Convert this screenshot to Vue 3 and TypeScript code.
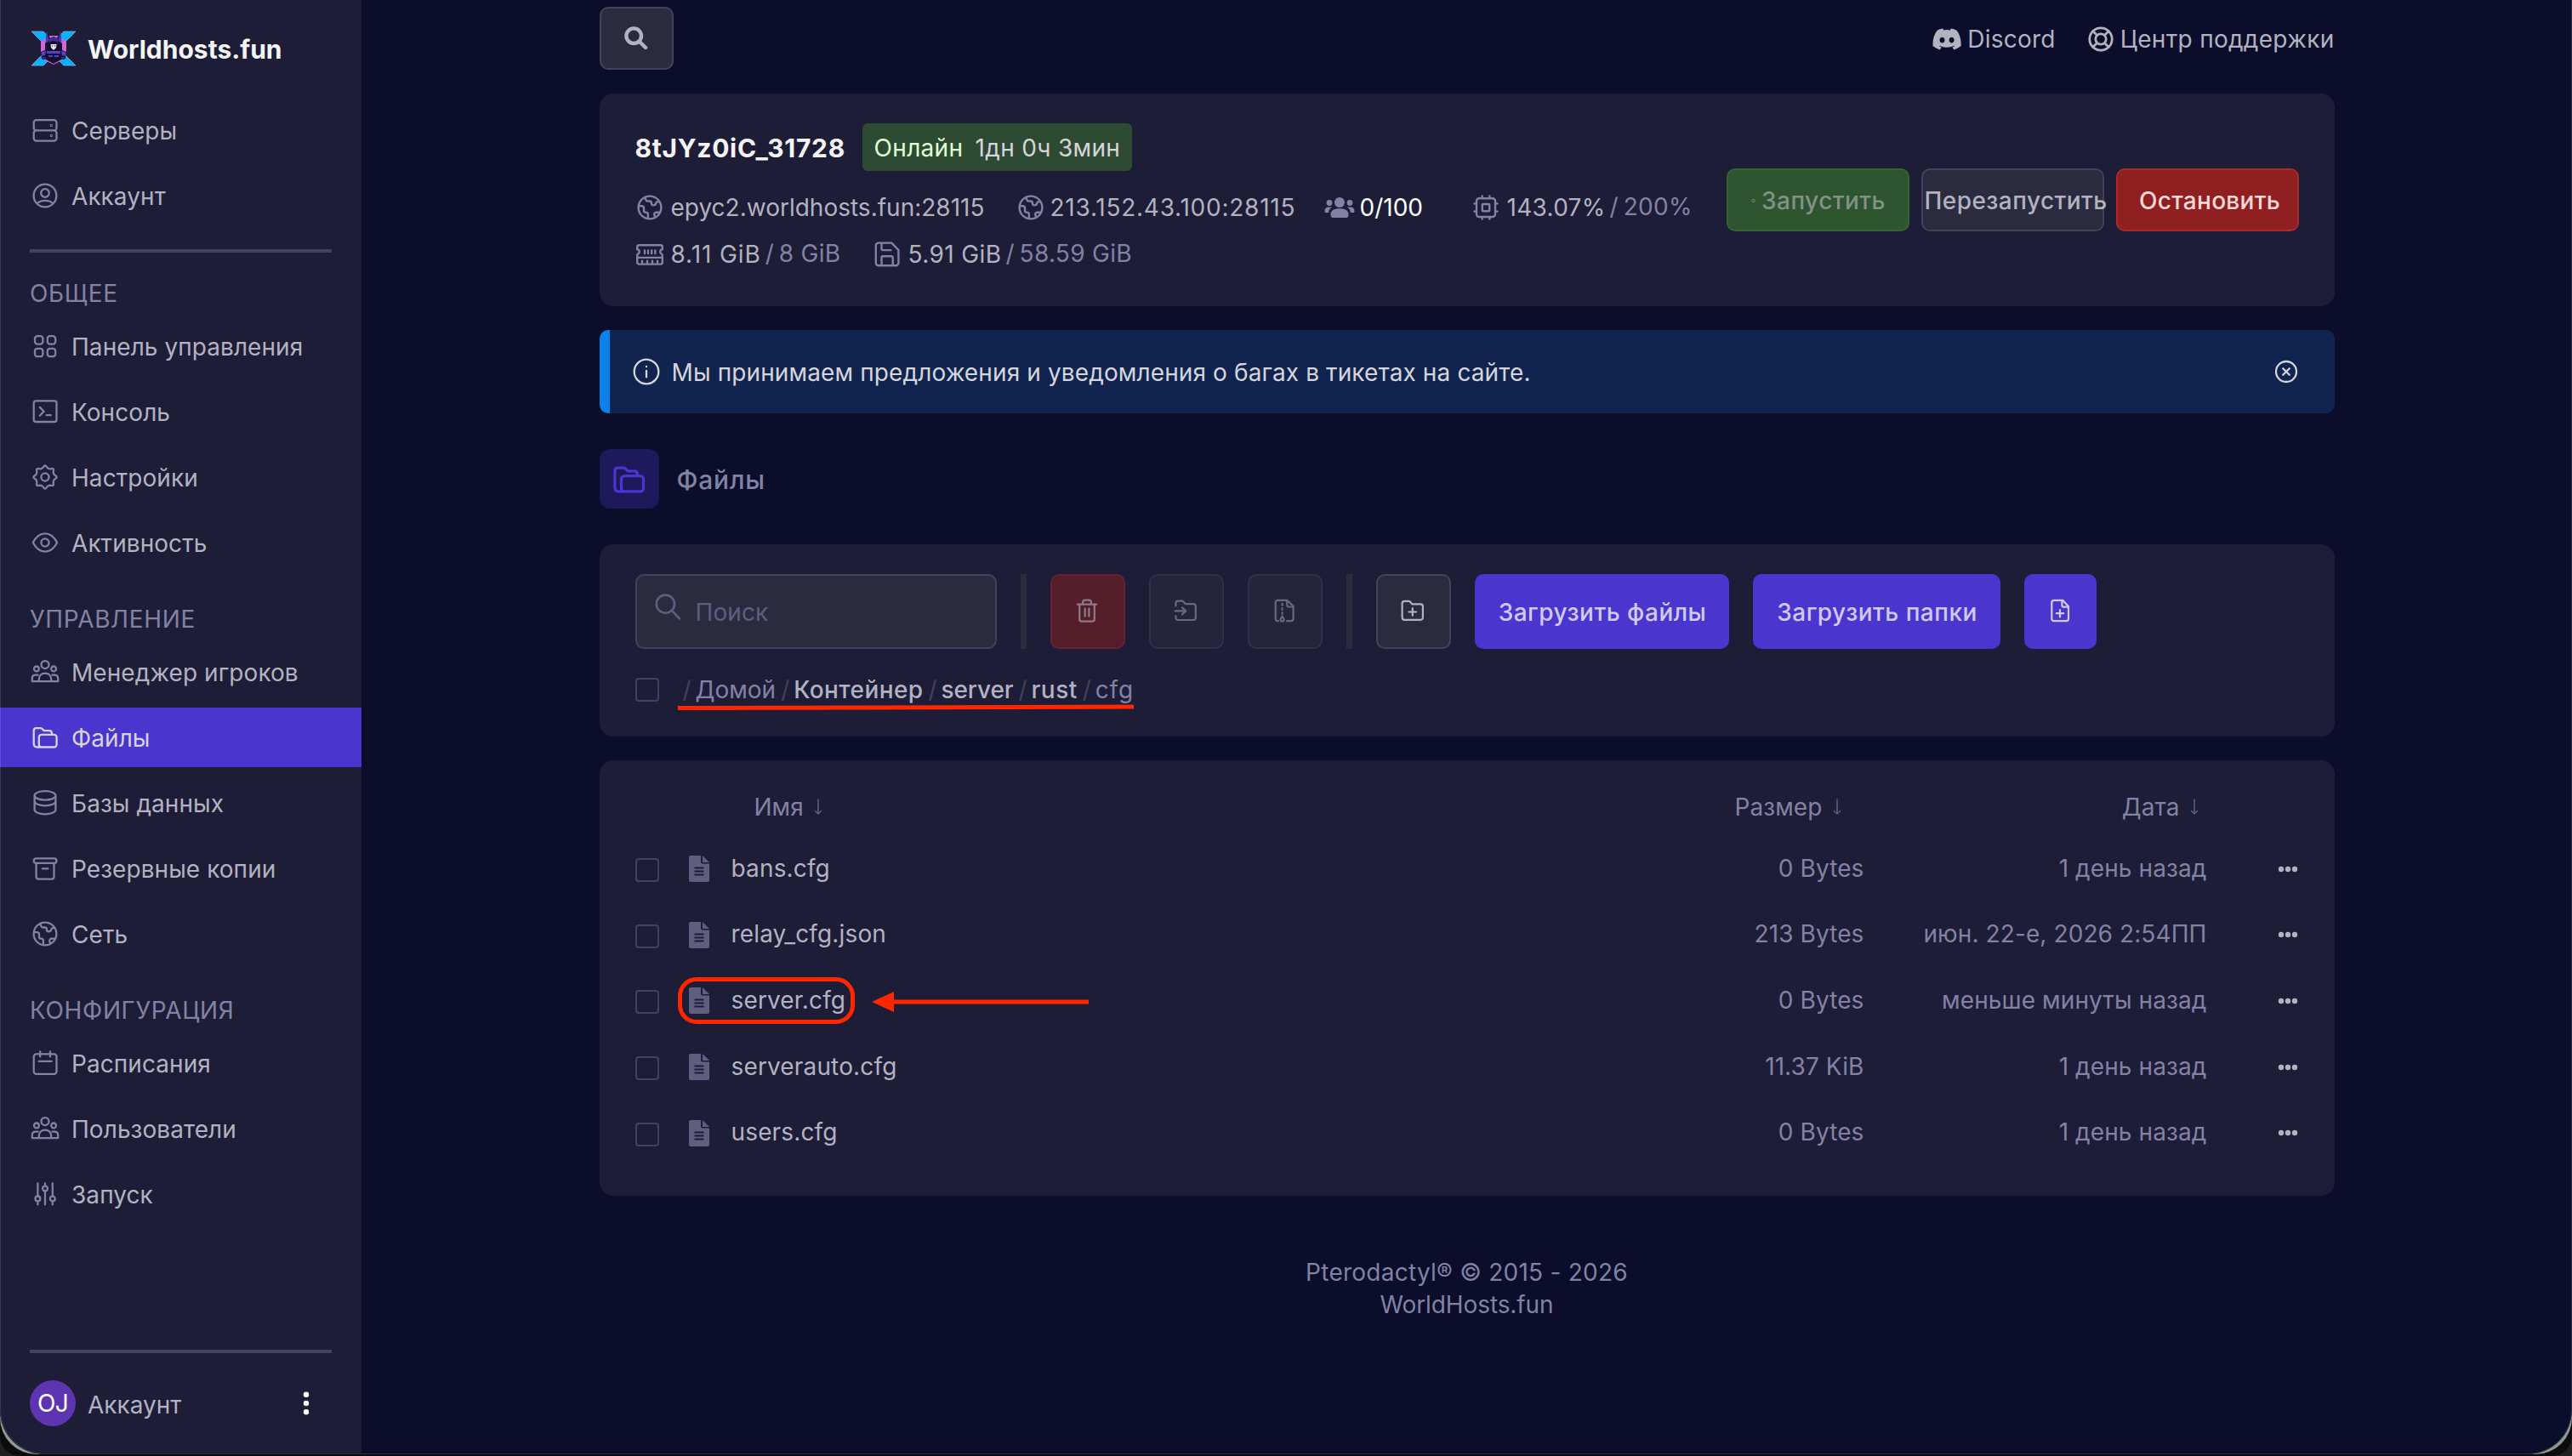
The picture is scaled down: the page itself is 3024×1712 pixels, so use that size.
<script setup lang="ts">
interface NavItem { icon: string; label: string; active?: boolean }
interface NavGroup { title: string; items: NavItem[] }
interface FileRow { name: string; size: string; date: string; marked?: boolean }

// Wavy gear outline: eight soft lobes around the centre.
function gearPath(): string {
  const pts: string[] = []
  for (let i = 0; i < 96; i++) {
    const a = (i / 96) * Math.PI * 2
    const r = 12 + 1.35 * Math.cos(8 * a) + 0.25 * Math.cos(16 * a)
    pts.push(`${(18 + r * Math.sin(a)).toFixed(2)} ${(18 - r * Math.cos(a)).toFixed(2)}`)
  }
  return `M${pts.join('L')}Z`
}

const dot = (x: number, y: number, r: number) => `M${x - r} ${y}a${r} ${r} 0 1 0 ${2 * r} 0a${r} ${r} 0 1 0 ${-2 * r} 0Z`
const box = (x: number, y: number, w: number, h: number, r: number) =>
  `M${x + r} ${y}h${w - 2 * r}a${r} ${r} 0 0 1 ${r} ${r}v${h - 2 * r}a${r} ${r} 0 0 1 ${-r} ${r}h${-(w - 2 * r)}a${r} ${r} 0 0 1 ${-r} ${-r}v${-(h - 2 * r)}a${r} ${r} 0 0 1 ${r} ${-r}Z`

// Stroke icons on a 36x36 grid.
const icons: Record<string, string> = {
  server: box(4.7, 6.2, 26.8, 12.2, 3) + box(4.7, 18.4, 26.8, 12.2, 3) + dot(25.3, 12.5, 0.5) + dot(25.3, 24.4, 0.5),
  account: dot(18, 18, 13.4) + dot(18, 15, 4.8) + 'M9 27.3c1.6-2.2 5-3.5 9-3.5s7.4 1.3 9 3.5',
  grid: box(6, 6.2, 9.4, 9.4, 3) + box(20.8, 6.2, 9.4, 9.4, 3) + box(6, 20.8, 9.4, 9.4, 3) + box(20.8, 20.8, 9.4, 9.4, 3),
  terminal: box(4.7, 5.4, 26.8, 24.6, 2.6) + 'M11.8 12.9l4.8 4.9-4.8 4.9M19.6 22.2h5.2',
  gear: gearPath() + dot(18, 18, 4.6),
  eye: 'M3.8 18C7.6 10.7 12.5 7.4 18 7.4S28.4 10.7 32.2 18C28.4 25.3 23.5 28.6 18 28.6S7.6 25.3 3.8 18Z' + dot(18, 18, 4.6),
  users: dot(18, 9.6, 4.5) + dot(7.9, 14.4, 2.9) + dot(28.1, 14.4, 2.9) +
    'M10.8 29v-2.2c0-4.4 3-7.2 7.2-7.2s7.2 2.8 7.2 7.2V29M9.6 21.6H7c-2.6 0-4.2 1.6-4.2 4V29.2h30.4V25.6c0-2.4-1.6-4-4.2-4h-2.6',
  folders: box(10.8, 14.9, 20.8, 14.6, 3) + 'M14 29.5H8.7c-2.6 0-4-1.4-4-4V10.2c0-2 1-3 3-3h5c1 0 1.7.4 2.3 1.1l1.7 1.9h6.2c2 0 3 1 3 3v1.5',
  database: 'M5.6 9.4c0-2.9 5.5-5.2 12.4-5.2s12.4 2.3 12.4 5.2-5.5 5.2-12.4 5.2S5.6 12.3 5.6 9.4ZM5.6 9.4V26c0 3 5.5 5.3 12.4 5.3S30.4 29 30.4 26V9.4M5.6 16c0 2.9 5.500 5.300 12.400 5.300s12.400-2.400 12.400-5.300',
  archive: box(4.7, 6.3, 26.8, 5.6, 2.7) + 'M7.6 12v15.7c0 1.8 1.1 2.9 2.9 2.9h15.1c1.8 0 2.9-1.1 2.9-2.9V12M14.8 18.4h6.6',
  globe: dot(18, 18, 13.4) +
    'M12.2 6.4l1.3 2.8c.4.9 1.1 1.3 2 1.3h2.1c1.4 0 2.3 1 2.3 2.3 0 1.6.9 2.6 2.4 2.6 1.8 0 2.6-.9 2.9-2.6.2-1 .9-1.6 1.9-1.6h2.6M4.8 16.2h3.6c1.7 0 2.6 1 2.6 2.5v2.7c0 1.5.9 2.3 2.3 2.3 1.7 0 2.6 1 2.6 2.6v4.8M24.3 29.4l-1-2.5c-.4-1.8.6-3.2 2.3-3.2h4.4',
  calendar: box(4.7, 7.4, 26.8, 23.4, 3) + 'M12.2 4.4v6M24 4.4v6M10.6 15.8h15',
  sliders: dot(9.4, 23.4, 2.9) + dot(18, 11.6, 2.9) + dot(26.8, 23.4, 2.9) + 'M9.4 5.4v15M9.4 26.4v4M18 5.4v3.2M18 14.6v15.8M26.8 5.4v15M26.8 26.4v4',
  ram: 'M3.2 9.2a2 2 0 0 1 2-2h25.600a2 2 0 0 1 2 2v3a2.800 2.800 0 0 0-1.200 5.200l1.200 1.400v8.800a2 2 0 0 1-2 2H5.200a2 2 0 0 1-2-2v-8.800l1.200-1.400A2.800 2.800 0 0 0 3.200 12.200ZM3.600 21.900h28.800M12 13.400v3.600M16 13.400v3.600M20.200 13.400v3.600M24.400 13.400v3.600M9 25.600v3.600M15 25.600v3.600M21 25.600v3.600M27 25.600v3.600',
  disk: 'M7.8 4.6h15.4l8.2 8.4v15.2a3 3 0 0 1-3 3H7.8a3 3 0 0 1-3-3V7.600a3 3 0 0 1 3-3ZM11.500 31V21.800a1.500 1.500 0 0 1 1.500-1.500h10.200a1.500 1.500 0 0 1 1.500 1.500V31M11.500 5v6.600a1.500 1.500 0 0 0 1.500 1.500h9.500',
  cpu: box(7, 7.2, 22, 21.8, 3) + box(13.8, 14, 8.4, 8.2, 0.5) + 'M13.6 4.4v2.4M22.4 4.4v2.4M13.6 29.2v2.4M22.4 29.2v2.4M4.4 13.4h2.4M4.4 22.6h2.4M29.2 13.4h2.4M29.2 22.6h2.4',
  lifebuoy: dot(18, 18, 13.2) + dot(18, 18, 6.2) + 'M8.6 8.6l5 5M27.4 8.6l-5 5M8.6 27.4l5-5M27.4 27.4l-5-5',
  info: dot(18, 18, 14.3) + 'M18 17v7.4M18 11.8v.4',
  close: dot(18, 18, 12) + 'M14.2 14.2l7.6 7.6M21.8 14.2l-7.6 7.6',
  search: dot(15.4, 15.2, 10.6) + 'M23 23l9 9.4',
  trash: 'M6.8 10.6h22.4M13.2 10.2V8c0-1.6 1-2.4 2.4-2.4h4.8c1.4 0 2.4.8 2.4 2.4v2.2M9.2 11v17c0 1.6 1 2.6 2.6 2.6h12.4c1.6 0 2.6-1 2.6-2.6V11M15.6 15.6v9M20.4 15.6v9',
  folderMove: 'M6.4 12.6V9.4c0-1.8.9-2.7 2.7-2.7h4.6c.9 0 1.4.3 1.9.9l2 2.6h9.5c1.8 0 2.7.9 2.7 2.7v13.4c0 1.8-.9 2.7-2.7 2.7H9.1c-1.8 0-2.7-.9-2.7-2.7v-2M5.6 18.4h12M14 14.4l4.2 4-4.2 4',
  fileZip: 'M11 30.2H10.4c-1.8 0-2.7-.9-2.7-2.7V8.6c0-1.8.9-2.7 2.7-2.7h11.2l7 7.2v14.4c0 1.8-.9 2.7-2.7 2.7H21M21.2 6.2v5c0 1.5.8 2.3 2.3 2.3h4.8M15.6 9.8v2M15.6 15v2M15.6 20v2M15.6 24.4l-1.9 3.6a2 2 0 1 0 3.8 0Z',
  folderPlus: 'M5.6 9.6c0-1.8.9-2.7 2.7-2.7h5c.9 0 1.4.3 1.9.9l2 2.6h10c1.8 0 2.7.9 2.7 2.7v13c0 1.8-.9 2.7-2.7 2.7H8.3c-1.8 0-2.7-.9-2.7-2.7ZM17.8 15.2v8.6M13.5 19.5h8.6',
  filePlus: 'M8.3 8.6c0-1.8.9-2.7 2.7-2.7h10.4l6.6 7v14.6c0 1.8-.9 2.7-2.7 2.7H11c-1.8 0-2.7-.9-2.7-2.7ZM20.4 6.2v5.2c0 1.5.8 2.3 2.3 2.3h5M18 17v8.4M13.8 21.2h8.4',
}

const topItems: NavItem[] = [{ icon: 'server', label: 'Серверы' }, { icon: 'account', label: 'Аккаунт' }]
const groups: NavGroup[] = [
  { title: 'ОБЩЕЕ', items: [
    { icon: 'grid', label: 'Панель управления' },
    { icon: 'terminal', label: 'Консоль' },
    { icon: 'gear', label: 'Настройки' },
    { icon: 'eye', label: 'Активность' },
  ] },
  { title: 'УПРАВЛЕНИЕ', items: [
    { icon: 'users', label: 'Менеджер игроков' },
    { icon: 'folders', label: 'Файлы', active: true },
    { icon: 'database', label: 'Базы данных' },
    { icon: 'archive', label: 'Резервные копии' },
    { icon: 'globe', label: 'Сеть' },
  ] },
  { title: 'КОНФИГУРАЦИЯ', items: [
    { icon: 'calendar', label: 'Расписания' },
    { icon: 'users', label: 'Пользователи' },
    { icon: 'sliders', label: 'Запуск' },
  ] },
]
const files: FileRow[] = [
  { name: 'bans.cfg', size: '0 Bytes', date: '1 день назад' },
  { name: 'relay_cfg.json', size: '213 Bytes', date: 'июн. 22-е, 2026 2:54ПП' },
  { name: 'server.cfg', size: '0 Bytes', date: 'меньше минуты назад', marked: true },
  { name: 'serverauto.cfg', size: '11.37 KiB', date: '1 день назад' },
  { name: 'users.cfg', size: '0 Bytes', date: '1 день назад' },
]
</script>

<template>
  <div class="screen">
    <div class="window">
      <aside class="sidebar">
        <div class="brand">
          <svg class="logo" viewBox="0 0 54 42" width="54" height="42">
            <path d="M1 1h14l11 11-6 8zM53 1H39L28 12l6 8zM1 41h14l11-11-6-8zM53 41H39L28 30l6-8z" fill="#00b4ff" stroke="#9aa3b8" stroke-width=".8" />
            <path d="M12 13l9-7h12l9 7v14l-5 8-10 5-10-5-5-8z" fill="#d465d6" />
            <path d="M19 1l2 11-4 3v8l-5 2 1 8 5 1 9 5 9-5 5-1 1-8-5-2v-8l-4-3 2-11-4 8-4-2-4 2z" fill="#15102f" />
            <path d="M19 0l2.500 12-4 3 .5-8zM35 0l-2.500 12 4 3-.5-8z" fill="#4a38b8" />
            <path d="M21 10q6-4 12 0l-1 4q-5-4-10 0z" fill="#3d2f9e" />
            <path d="M23.500 16h7l-.5 4-3 3-3-3z" fill="#efeaf7" />
            <path d="M24.800 18h1.500M27.900 18h1.500" stroke="#15102f" stroke-width="1.200" />
            <path d="M19 24h16v3H19zM21 29h5v2h-5zM28 29h5v2h-5zM13 25l5-1-1 5-4 1zM41 25l-5-1 1 5 4 1z" fill="#5443c8" />
            <path d="M13 31h5v3h-4zM36 31h5l-1 3h-4z" fill="#32277f" />
          </svg>
          <span>Worldhosts.fun</span>
        </div>
        <nav class="nav">
          <a v-for="n in topItems" :key="n.label" class="item">
            <svg class="ic" viewBox="0 0 36 36"><path :d="icons[n.icon]" /></svg>{{ n.label }}
          </a>
        </nav>
        <div class="rule rule-top"></div>
        <template v-for="g in groups" :key="g.title">
          <div class="group-title">{{ g.title }}</div>
          <nav class="nav">
            <a v-for="n in g.items" :key="n.label" class="item" :class="{ active: n.active }">
              <svg class="ic" viewBox="0 0 36 36"><path :d="icons[n.icon]" /></svg>{{ n.label }}
            </a>
          </nav>
        </template>
        <div class="rule rule-bottom"></div>
        <div class="profile">
          <span class="avatar">OJ</span>
          <span class="profile-name">Аккаунт</span>
          <svg viewBox="0 0 8 28" width="8" height="28"><circle cx="4" cy="3.800" r="3.200" /><circle cx="4" cy="14" r="3.200" /><circle cx="4" cy="24.200" r="3.200" /></svg>
        </div>
      </aside>

      <main class="main">
        <div class="content">
          <header class="topbar">
            <button class="btn gray search-btn">
              <svg viewBox="0 0 28 28" width="28" height="28"><circle cx="11.200" cy="11.200" r="8.800" /><path d="M18 18l7 7" /></svg>
            </button>
            <div class="links">
              <a class="discord">
                <svg viewBox="0 0 34 26" width="34" height="26"><path d="M28.600 2.700A27 27 0 0 0 21.800.6l-.9 1.800a25 25 0 0 0-7.700 0L12.300.6A27 27 0 0 0 5.500 2.700C1.200 9 .1 15.200.6 21.300a27 27 0 0 0 8.300 4.100l1.800-2.900-2.800-1.300.7-.5a19.500 19.500 0 0 0 16.900 0l.7.5-2.800 1.400 1.800 2.800a27 27 0 0 0 8.300-4.100c.7-7.100-1.100-13.200-4.900-18.600zM11.500 17.500c-1.700 0-3-1.500-3-3.300s1.300-3.400 3-3.400 3 1.500 3 3.400-1.300 3.300-3 3.300zm11.100 0c-1.600 0-3-1.500-3-3.300s1.300-3.400 3-3.400c1.700 0 3 1.500 3 3.400s-1.300 3.300-3 3.300z" /></svg>
                <span>Discord</span>
              </a>
              <a class="support">
                <svg class="ic" viewBox="0 0 36 36"><path :d="icons.lifebuoy" /></svg>
                <span>Центр поддержки</span>
              </a>
            </div>
          </header>

          <section class="card server-card">
            <div class="server-info">
              <div class="title-row">
                <h1>8tJYz0iC_31728</h1>
                <div class="badge"><span class="on">Онлайн</span><span class="up">1дн 0ч 3мин</span></div>
              </div>
              <div class="stats first">
                <div class="stat"><svg class="ic" viewBox="0 0 36 36"><path :d="icons.globe" /></svg><span>epyc2.worldhosts.fun:28115</span></div>
                <div class="stat"><svg class="ic" viewBox="0 0 36 36"><path :d="icons.globe" /></svg><span class="ip">213.152.43.100:28115</span></div>
                <div class="stat players">
                  <svg viewBox="0 0 36 26" width="36" height="26"><ellipse cx="18" cy="7" rx="6" ry="6" /><circle cx="6" cy="7.500" r="3.400" /><circle cx="30" cy="7.500" r="3.400" /><path d="M7.500 21c0-4.200 3.800-6.800 10.500-6.800S28.500 16.800 28.500 21c0 2.700-1 4-3 4h-15c-2 0-3-1.300-3-4zM5 12.500h4.300c-2.800 1.500-4 3.600-4.300 6.500H2c-1.200 0-1.500-.6-1.500-1.800 0-2.800 1.700-4.700 4.500-4.700zM31 12.500h-4.300c2.800 1.500 4 3.600 4.300 6.500h3c1.200 0 1.500-.6 1.500-1.800 0-2.800-1.700-4.700-4.500-4.700z" /></svg>
                  <span>0/100</span>
                </div>
                <div class="stat"><svg class="ic" viewBox="0 0 36 36"><path :d="icons.cpu" /></svg><span class="pct">143.07%</span><i>/</i><em class="lim">200%</em></div>
              </div>
              <div class="stats second">
                <div class="stat"><svg class="ic" viewBox="0 0 36 36"><path :d="icons.ram" /></svg><span class="mem">8.11 GiB</span><i>/</i><em class="lim">8 GiB</em></div>
                <div class="stat"><svg class="ic" viewBox="0 0 36 36"><path :d="icons.disk" /></svg><span class="disk">5.91 GiB</span><i>/</i><em class="lim">58.59 GiB</em></div>
              </div>
            </div>
            <div class="power">
              <button class="btn start"><svg viewBox="0 0 8 12" width="8" height="12"><circle cx="3.500" cy="6" r="1.600" /></svg>Запустить</button>
              <button class="btn gray restart">Перезапустить</button>
              <button class="btn stop">Остановить</button>
            </div>
          </section>

          <section class="alert">
            <svg class="ic" viewBox="0 0 36 36"><path :d="icons.info" /></svg>
            <p>Мы принимаем предложения и уведомления о багах в тикетах на сайте.</p>
            <svg class="ic close" viewBox="0 0 36 36"><path :d="icons.close" /></svg>
          </section>

          <div class="page-title">
            <div class="tile"><svg viewBox="0 0 36 36" width="45" height="45"><path :d="icons.folders" /></svg></div>
            <h2>Файлы</h2>
          </div>

          <section class="card tools">
            <div class="toolbar">
              <div class="search">
                <svg class="ic" viewBox="0 0 36 36"><path :d="icons.search" /></svg>
                <span>Поиск</span>
              </div>
              <div class="sep"></div>
              <button class="btn sq del off"><svg class="ic" viewBox="0 0 36 36"><path :d="icons.trash" /></svg></button>
              <button class="btn sq gray off"><svg class="ic" viewBox="0 0 36 36"><path :d="icons.folderMove" /></svg></button>
              <button class="btn sq gray off"><svg class="ic" viewBox="0 0 36 36"><path :d="icons.fileZip" /></svg></button>
              <div class="sep"></div>
              <button class="btn sq gray"><svg class="ic" viewBox="0 0 36 36"><path :d="icons.folderPlus" /></svg></button>
              <button class="btn primary up-files">Загрузить файлы</button>
              <button class="btn primary up-dirs">Загрузить папки</button>
              <button class="btn primary new"><svg class="ic" viewBox="0 0 36 36"><path :d="icons.filePlus" /></svg></button>
            </div>
            <div class="crumbs">
              <span class="check"></span>
              <div class="path">
                <i>/</i><span class="dim">Домой</span><i>/</i><span class="c1">Контейнер</span><i>/</i><span class="c2">server</span><i>/</i><span class="c3">rust</span><i>/</i><span class="dim last">cfg</span>
                <svg class="underline" viewBox="0 0 536 8" width="536" height="8"><path d="M0 4.500L536 3" /></svg>
              </div>
            </div>
          </section>

          <section class="card list">
            <div class="row head">
              <div class="col-name">Имя<svg class="arr" viewBox="0 0 10 20"><path d="M5 1v17M1.500 14.500L5 18l3.500-3.500" /></svg></div>
              <div class="col-size">Размер<svg class="arr" viewBox="0 0 10 20"><path d="M5 1v17M1.500 14.500L5 18l3.500-3.500" /></svg></div>
              <div class="col-date">Дата<svg class="arr" viewBox="0 0 10 20"><path d="M5 1v17M1.500 14.500L5 18l3.500-3.500" /></svg></div>
            </div>
            <div v-for="f in files" :key="f.name" class="row">
              <span class="check"></span>
              <div class="name-cell">
                <svg class="file" viewBox="0 0 24 31" width="24" height="31"><path d="M2 0h12v7.500a2 2 0 0 0 2 2h8V29a2 2 0 0 1-2 2H2a2 2 0 0 1-2-2V2a2 2 0 0 1 2-2zM16 0l8 8h-8z" /><path class="lines" d="M6.500 14.400h11M6.500 18.400h11M6.500 22.400h11" /></svg>
                <span>{{ f.name }}</span>
                <template v-if="f.marked">
                  <span class="frame"></span>
                  <svg class="pointer" viewBox="0 0 256 26" width="256" height="26"><path d="M0 13L26 1v24zM24 10.500h231v5H24z" /></svg>
                </template>
              </div>
              <div class="col-size">{{ f.size }}</div>
              <div class="col-date">{{ f.date }}</div>
              <svg class="more" viewBox="0 0 24 8" width="24" height="8"><circle cx="4" cy="4" r="3.200" /><circle cx="12" cy="4" r="3.200" /><circle cx="20" cy="4" r="3.200" /></svg>
            </div>
          </section>

          <footer><div>Pterodactyl® © 2015 - 2026</div><div class="f2">WorldHosts.fun</div></footer>
        </div>
      </main>
    </div>
  </div>
</template>

<style>
html, body { margin: 0; background: #1a1a1a; }
</style>

<style scoped>
* { box-sizing: border-box; }
.screen {
  position: relative; z-index: 0; width: 3024px; height: 1712px; overflow: hidden; background: #1f1f1f;
  font-family: Inter, "Noto Sans", sans-serif; font-size: 28px; line-height: 34px; color: #b2b2c1;
}
/* Desktop edge that shows past the rounded window corners */
.screen::before { content: ""; position: absolute; z-index: -2; inset: 0; background: #0c0c0c; border-radius: 0 0 24px 24px; }
.screen::after { content: ""; position: absolute; z-index: -1; inset: 0 0 2px; background: #8b9a90; border-radius: 0 0 43px 43px; }
.window {
  position: relative; display: flex; width: 3024px; height: 1710px; overflow: hidden; background: #0b0d2a;
  border-radius: 0 0 52px 52px;
}
.window::after { content: ""; position: absolute; inset: -2px 0 0; border: 1px solid rgba(255, 255, 255, .13); border-radius: 0 0 52px 52px; pointer-events: none; }
.ic { width: 36px; height: 36px; flex: none; }
.ic path { fill: none; stroke: currentColor; stroke-width: 2.3; stroke-linecap: round; stroke-linejoin: round; }

.sidebar { display: flex; flex-direction: column; width: 425px; height: 1709px; flex: none; background: #1d1d37; }
.brand { display: flex; align-items: center; height: 118px; padding: 0 0 4px 36px; color: #f4f4f4; font-size: 30px; font-weight: 700; }
.brand span { margin-left: 13px; padding-top: 1px; }
.nav { display: flex; flex-direction: column; gap: 7px; }
.item { display: flex; align-items: center; height: 70px; padding: 1px 0 0 35px; letter-spacing: .06px; }
.item .ic { margin: -1px 13px 0 0; color: #8282a4; }
.item.active { background: #4a35cf; color: #d5d5db; }
.item.active .ic { color: #d5d5db; }
.rule { height: 4px; flex: none; margin: 0 35px; background: #42425b; }
.rule-top { margin-top: 28px; margin-bottom: -7px; }
.group-title { height: 34px; margin: 38px 0 10px 35px; color: #8282a4; letter-spacing: .65px; }
.rule-bottom { margin-top: auto; }
.profile { display: flex; align-items: center; height: 118px; padding: 0 61px 0 35px; }
.avatar { display: flex; align-items: center; justify-content: center; width: 54px; height: 54px; border-radius: 50%; background: #5e35b1; color: #fff; letter-spacing: -.8px; }
.profile-name { flex: 1; margin-left: 14px; padding-top: 3px; }
.profile svg { fill: #fff; }

.main { flex: 1; display: flex; justify-content: center; }
.content { width: 2040px; display: flex; flex-direction: column; }
.btn { display: flex; align-items: center; justify-content: center; padding: 0; border: 2px solid transparent; border-radius: 10px; font: 500 28px/34px Inter, sans-serif; white-space: nowrap; }
.gray { background: #2b2b40; border-color: #42425b; color: #b2b2c1; }
.topbar { display: flex; justify-content: space-between; height: 110px; padding-top: 8px; }
.search-btn { width: 87px; height: 74px; }
.search-btn svg { fill: none; stroke: #b2b2c1; stroke-width: 4.4; stroke-linecap: round; }
.links { display: flex; height: 75px; align-items: center; }
.links a { display: flex; align-items: center; }
.discord svg { fill: #b2b2c1; margin-right: 7px; }
.discord span { letter-spacing: .25px; }
.support { margin-left: 35px; letter-spacing: .3px; }
.support .ic { margin-right: 5px; }
.support .ic path { stroke-width: 2.8; }

.card { background: #1d1d37; border-radius: 16px; }
.server-card { display: flex; height: 250px; padding: 0 42px; }
.server-info { flex: 1; padding-top: 35px; }
.title-row { display: flex; align-items: center; height: 56px; }
h1 { width: 267px; margin: 0; padding-top: 2px; color: #f4f4f4; font-size: 30px; line-height: 36px; font-weight: 700; letter-spacing: .7px; white-space: nowrap; }
.badge { display: flex; align-items: center; width: 317px; height: 56px; padding: 2px 0 0 14px; border-radius: 6px; background: #2d4a32; letter-spacing: .33px; }
.on { width: 119px; color: #e1ffd8; }
.up { color: #d5d5db; }
.stats { display: flex; height: 36px; }
.first { margin-top: 25px; }
.second { margin-top: 19px; }
.stat { display: flex; align-items: center; white-space: nowrap; margin-left: -1px; }
.stat .ic { margin-right: 7px; color: #8282a4; }
.stat .ic path { stroke-width: 2.4; }
.first .stat:nth-child(1) { width: 448px; }
.first .stat:nth-child(2) { width: 363px; }
.first .stat:nth-child(3) { width: 172px; }
.second .stat:nth-child(1) { width: 279px; }
.first .stat:nth-child(2) .ic { margin-right: 5px; }
.stat + .stat { margin-left: 0; }
.ip { letter-spacing: .75px; }
.players { color: #fff; }
.players svg { fill: #8282a4; margin-right: 6px; }
.pct { letter-spacing: .3px; }
.mem { letter-spacing: .9px; }
.disk { letter-spacing: .4px; }
.stat i, .stat em { font-style: normal; color: #8282a4; position: relative; top: -1px; }
.stat i { margin: 0 6px 0 5px; }
.lim { letter-spacing: .3px; }
.power { display: flex; gap: 14px; margin-top: 88px; }
.power .btn { width: 215px; height: 74px; padding-top: 2px; letter-spacing: .45px; }
.start { background: #2f5430; border-color: #376332; color: #7f9285; }
.start svg { fill: none; stroke: #5e7e66; stroke-width: 1.2; margin: 0 5px 0 1px; }
.power .restart { justify-content: flex-start; padding-left: 2px; }
.power .stop { background: #8f1f20; border-color: #aa2a2a; color: #ffd8d8; padding-left: 6px; letter-spacing: .3px; }

.alert { display: flex; align-items: center; height: 98px; margin-top: 28px; padding: 0 39px 0 25px; border-left: 12px solid #0b82ea; border-radius: 10px; background: #10244f; color: #d5d5db; }
.alert p { flex: 1; margin: 0 0 0 12px; padding-top: 2px; letter-spacing: .12px; white-space: nowrap; }
.page-title { display: flex; align-items: center; height: 70px; margin-top: 42px; }
.tile { display: flex; align-items: center; justify-content: center; width: 70px; height: 70px; padding-right: 1px; border-radius: 12px; background: #1e195b; }
.tile path { fill: none; stroke: #4a35cf; stroke-width: 2.6; stroke-linecap: round; stroke-linejoin: round; }
h2 { margin: 0 0 0 21px; padding-top: 2px; color: #8282a4; font-size: 30px; line-height: 36px; font-weight: 500; letter-spacing: .8px; }

.tools { height: 226px; margin-top: 42px; padding: 35px 42px 0; }
.toolbar { display: flex; height: 88px; gap: 28px; }
.search { display: flex; align-items: center; width: 425px; height: 88px; padding-left: 18px; background: #2b2b40; border: 2px solid #42425b; border-radius: 10px; color: #5e5e7f; letter-spacing: .1px; }
.search .ic { margin: -12px 15px 0 0; }
.search .ic path { stroke-width: 2.6; }
.search span { padding-top: 2px; }
.sep { width: 7px; height: 88px; background: #2b2b40; }
.sq { width: 88px; height: 88px; }
.sq .ic { margin: -2px 2px 0 0; }
.sq .ic path, .new .ic path { stroke-width: 2.2; }
.del { background: #8f1f20; border-color: #aa2a2a; color: #ffd8d8; }
.off { opacity: .5; }
.primary { background: #4a35cf; border-color: #4a35cf; color: #d0c9f2; height: 88px; padding-top: 2px; letter-spacing: .48px; }
.up-files { width: 299px; padding-left: 2px; }
.up-dirs { width: 291px; padding-left: 2px; }
.new { width: 85px; padding: 0 0 2px; }
.crumbs { display: flex; align-items: center; height: 34px; margin-top: 31px; }
.check { width: 28px; height: 28px; flex: none; border: 2px solid #42425b; border-radius: 4px; }
.path { position: relative; display: flex; margin-left: 28px; white-space: nowrap; }
.path i { font-style: normal; color: #42425b; width: 10px; margin-right: 5px; }
.path span { margin-right: 6px; }
.path .dim { color: #8282a4; }
.path .c1 { letter-spacing: .4px; font-weight: 450; }
.path .c2 { letter-spacing: -.1px; font-weight: 450; }
.path .c3 { letter-spacing: .5px; font-weight: 450; }
.path .last { letter-spacing: .8px; }
.underline { position: absolute; left: -6px; top: 34px; }
.underline path { stroke: #ff2600; stroke-width: 5; }

.list { height: 512px; margin-top: 28px; padding: 34px 42px 0; color: #8282a4; }
.row { display: flex; align-items: center; height: 77.6px; }
.row.head { height: 42px; margin-bottom: 13px; }
.row .check { margin-top: 3px; }
.col-name { display: flex; align-items: center; flex: 1; margin-left: 140px; }
.head .col-size { display: flex; align-items: center; justify-content: flex-end; margin-right: 26px; }
.head .col-date { display: flex; align-items: center; justify-content: flex-end; width: 403px; padding-right: 9px; margin-right: 109px; }
.arr { width: 10px; height: 20px; margin: 0 0 0 12px; fill: none; stroke: #5e5e7f; stroke-width: 1.5; stroke-linecap: round; stroke-linejoin: round; }
.name-cell { position: relative; display: flex; align-items: center; flex: 1; height: 34px; margin-left: 35px; color: #b2b2c1; letter-spacing: .15px; }
.name-cell > span:not(.frame), .row:not(.head) .col-size, .row:not(.head) .col-date { margin-top: -2px; }
.file { fill: #5e5e7f; margin-right: 26px; }
.file .lines { stroke: #1d1d37; stroke-width: 2; }
.frame { position: absolute; left: -13px; top: -11px; width: 208px; height: 55px; border: 5px solid #ff2600; border-radius: 22px; }
.pointer { position: absolute; left: 215px; top: 5px; fill: #ff2600; }
.col-size, .col-date { white-space: nowrap; text-align: right; letter-spacing: .1px; }
.row:not(.head) .col-size { width: 200px; }
.row:not(.head) .col-date { width: 403px; }
.more { fill: #b2b2c1; margin: 0 1px 0 82px; }
.row:not(.head) .more { margin-left: 83px; }

footer { margin-top: 71px; text-align: center; line-height: 38px; color: #8282a4; letter-spacing: .25px; }
.f2 { letter-spacing: -.1px; }
</style>
